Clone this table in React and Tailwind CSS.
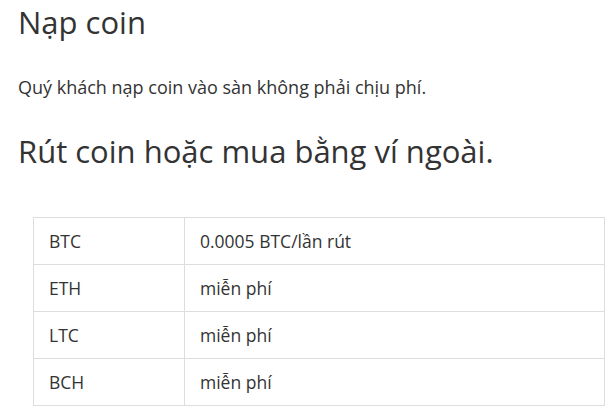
const fees = [
  { coin: "BTC", fee: "0.0005 BTC/lần rút" },
  { coin: "ETH", fee: "miễn phí" },
  { coin: "LTC", fee: "miễn phí" },
  { coin: "BCH", fee: "miễn phí" },
];

export default function App() {
  return (
    <div className="bg-white w-[610px] h-[413px] overflow-hidden text-[#333] font-['Open_Sans',sans-serif]">
      <div className="pl-[18px] pr-[6px]">
        <h1 className="text-[31px] leading-[44px] font-normal">Nạp coin</h1>
        <p className="text-[18px] leading-[24px] mt-[31px]">
          Quý khách nạp coin vào sàn không phải chịu phí.
        </p>
        <h2 className="text-[31px] leading-[42px] mt-[31px] font-normal">
          Rút coin hoặc mua bằng ví ngoài.
        </h2>
        <table className="ml-[15px] mt-[45px] w-[572px] border-collapse text-[17.5px]">
          <tbody>
            {fees.map((row) => (
              <tr key={row.coin}>
                <td className="w-[151px] h-[47px] border border-[#ddd] px-[15px]">
                  {row.coin}
                </td>
                <td className="h-[47px] border border-[#ddd] px-[15px]">{row.fee}</td>
              </tr>
            ))}
          </tbody>
        </table>
      </div>
    </div>
  );
}
